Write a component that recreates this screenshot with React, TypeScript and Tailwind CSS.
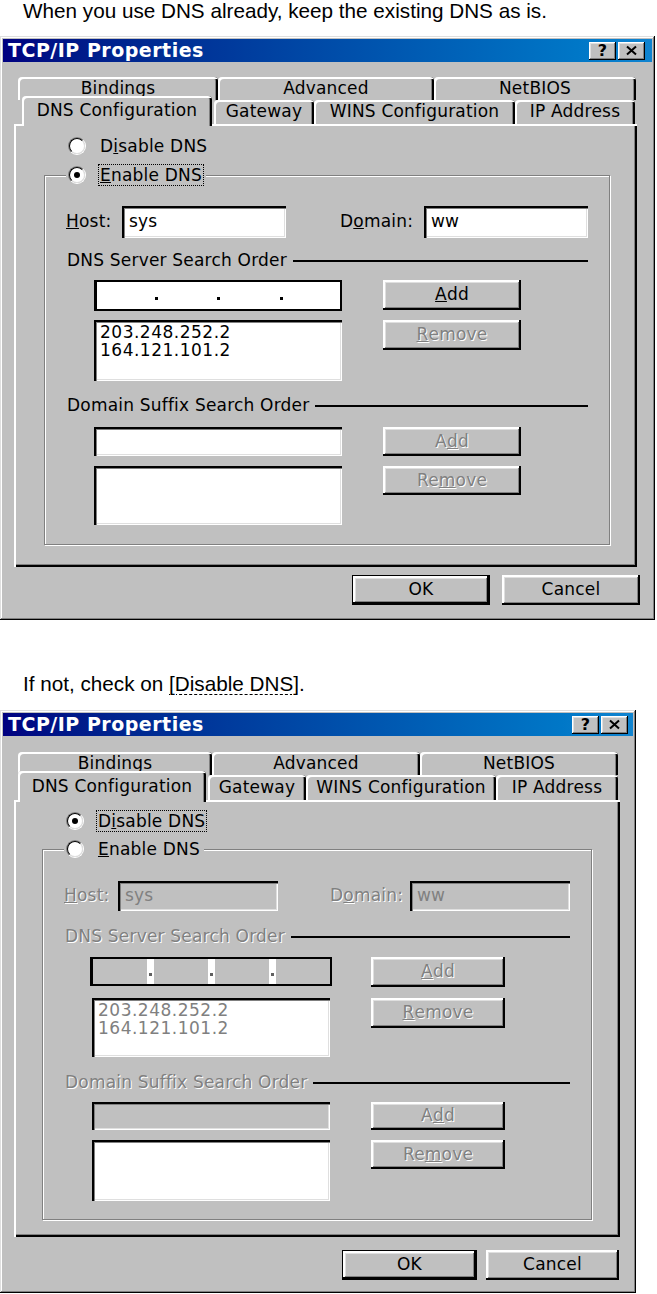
import React from "react";

const frame =
  "shadow-[inset_-1px_-1px_#000,inset_1px_1px_#dfdfdf,inset_-2px_-2px_#808080,inset_2px_2px_#fff]";
const raised =
  "shadow-[inset_-2px_-2px_#000,inset_2px_2px_#fff,inset_-3px_-3px_#808080,inset_3px_3px_#dfdfdf]";
const raisedThin =
  "shadow-[inset_-1px_-1px_#000,inset_1px_1px_#fff,inset_-2px_-2px_#808080,inset_2px_2px_#dfdfdf]";
const sunken =
  "shadow-[inset_2px_2px_#000,inset_3px_3px_#808080,inset_-1px_-1px_#fff,inset_-2px_-2px_#dfdfdf]";
const dim = "text-[#808080] [text-shadow:1px_1px_0_#fff]";

const TitleBtn = ({ children }: { children: React.ReactNode }) => (
  <div className={`w-[27px] h-[18px] bg-[#c0c0c0] flex items-center justify-center ${raisedThin}`}>
    {children}
  </div>
);

const Tab = ({ label, className }: { label: string; className: string }) => (
  <div
    className={`${className} rounded-t-[4px] bg-[#c0c0c0] flex items-center justify-center shadow-[inset_2px_2px_#fff,inset_-2px_0_#000,inset_-3px_0_#808080]`}
  >
    {label}
  </div>
);

const Radio = ({ checked }: { checked: boolean }) => (
  <span className="w-[18px] h-[18px] rounded-full border border-t-[#808080] border-l-[#808080] border-r-white border-b-white flex">
    <span className="flex-1 rounded-full border border-t-black border-l-black border-r-[#dfdfdf] border-b-[#dfdfdf] bg-white flex items-center justify-center">
      {checked && <span className="w-[6px] h-[6px] rounded-full bg-black" />}
    </span>
  </span>
);

const RadioItem = ({
  checked,
  focus,
  children,
}: {
  checked: boolean;
  focus: boolean;
  children: React.ReactNode;
}) => (
  <div className="flex items-center gap-[12px]">
    <Radio checked={checked} />
    <span
      className={`px-[1px] leading-[20px] border border-dotted ${focus ? "border-black" : "border-transparent"}`}
    >
      {children}
    </span>
  </div>
);

const Btn = ({
  children,
  className,
  disabled,
  isDefault,
}: {
  children: React.ReactNode;
  className: string;
  disabled?: boolean;
  isDefault?: boolean;
}) => (
  <div className={`${className} bg-[#c0c0c0] flex ${isDefault ? "border border-black" : ""}`}>
    <div
      className={`flex-1 flex items-center justify-center ${raised} ${disabled ? dim : "text-black"}`}
    >
      {children}
    </div>
  </div>
);

const Field = ({ className, off, text }: { className: string; off: boolean; text: string }) => (
  <div
    className={`${className} h-full ${sunken} ${off ? "bg-[#c0c0c0] text-[#808080]" : "bg-white text-black"} flex items-center pl-[7px]`}
  >
    {text}
  </div>
);

const IpField = ({ className, off }: { className: string; off: boolean }) => {
  const seg = off ? "bg-[#c0c0c0]" : "bg-white";
  const Dot = () => (
    <div className="w-[7px] bg-white flex items-center justify-center">
      <span className={`w-[3px] h-[3px] mt-[6px] ${off ? "bg-[#606060]" : "bg-black"}`} />
    </div>
  );
  return (
    <div className={`${className} h-full flex border-2 border-black border-l-[3px] bg-white`}>
      <div className={`flex-1 ${seg}`} />
      <Dot />
      <div className={`flex-1 ${seg}`} />
      <Dot />
      <div className={`flex-1 ${seg}`} />
      <Dot />
      <div className={`flex-1 ${seg}`} />
    </div>
  );
};

const Header = ({ label, off, className }: { label: string; off: boolean; className: string }) => (
  <div className={`flex items-center h-[20px] pl-[22px] pr-[21px] ${className}`}>
    <span className={off ? dim : ""}>{label}</span>
    <div className="flex-1 h-[2px] bg-black ml-[6px]" />
  </div>
);

function Dialog({ off }: { off: boolean }) {
  const p = (on: string, dis: string) => (off ? dis : on);
  const lbl = off ? dim : "";

  return (
    <div
      className={`${p("w-[655px] h-[584px]", "w-[636px] h-[583px]")} bg-[#c0c0c0] p-[3px] flex flex-col text-[17px] tracking-[0.2px] ${frame}`}
    >
      <div
        className={`h-[23px] shrink-0 flex items-center justify-between pl-[5px] ${p("pr-[7px]", "pr-[5px]")} bg-linear-to-r from-[#000080] to-[#1084d0]`}
      >
        <span className="text-white font-bold text-[19px] tracking-[0.5px] leading-none">
          TCP/IP Properties
        </span>
        <div className="flex gap-[2px]">
          <TitleBtn>
            <span className="font-bold text-[16px] leading-none text-black">?</span>
          </TitleBtn>
          <TitleBtn>
            <svg width="13" height="11" viewBox="0 0 13 11">
              <path d="M2 1.5 11 9.5M11 1.5 2 9.5" stroke="#000" strokeWidth="2" />
            </svg>
          </TitleBtn>
        </div>
      </div>

      <div className={`${p("mt-[15px]", "mt-[16px]")} ml-[11px] flex flex-col`}>
        <div className="flex h-[23px] ml-[4px]">
          <Tab label="Bindings" className={`h-full ${p("w-[200px]", "w-[194px]")}`} />
          <Tab label="Advanced" className={`h-full ${p("w-[216px]", "w-[208px]")}`} />
          <Tab label="NetBIOS" className={`h-full ${p("w-[202px]", "w-[198px]")}`} />
        </div>
        <div className={`flex items-start ${p("h-[24px] ml-[8px]", "h-[25px] ml-[4px]")}`}>
          <Tab
            label="DNS Configuration"
            className={`relative z-10 -mt-[4px] ${p("w-[190px] h-[30px]", "w-[188px] h-[31px]")}`}
          />
          <Tab label="Gateway" className={`h-full ml-[2px] ${p("w-[100px]", "w-[98px]")}`} />
          <Tab label="WINS Configuration" className={`h-full ${p("w-[201px]", "w-[190px]")}`} />
          <Tab label="IP Address" className={`h-full ${p("w-[120px]", "w-[122px]")}`} />
        </div>
      </div>

      <div
        className={`ml-[11px] shrink-0 flex flex-col ${p("w-[623px] h-[443px] pt-[9px]", "w-[606px] h-[437px] pt-[8px]")} shadow-[inset_2px_2px_#fff,inset_-2px_-2px_#000,inset_-3px_-3px_#808080]`}
      >
        <div className={`h-[26px] flex items-center ${p("ml-[54px]", "ml-[52px]")}`}>
          <RadioItem checked={off} focus={off}>
            D<u>i</u>sable DNS
          </RadioItem>
        </div>

        <div
          className={`${p("mt-[16px] ml-[30px] w-[566px] h-[370px]", "mt-[15px] ml-[28px] w-[550px] h-[371px]")} border border-[#808080] shadow-[inset_1px_1px_#fff,1px_1px_#fff] flex flex-col`}
        >
          <div className="-mt-[14px] ml-[21px] h-[26px] w-fit px-[2px] bg-[#c0c0c0] flex items-center">
            <RadioItem checked={!off} focus={!off}>
              <u>E</u>nable DNS
            </RadioItem>
          </div>

          <div className={`flex items-center pl-[21px] ${p("mt-[18px] h-[32px]", "mt-[19px] h-[30px]")}`}>
            <span className={`${p("w-[56px]", "w-[54px]")} ${lbl}`}>
              <u>H</u>ost:
            </span>
            <Field className={p("w-[164px]", "w-[160px]")} off={off} text="sys" />
            <span className={`${p("ml-[54px] w-[84px]", "ml-[52px] w-[80px]")} ${lbl}`}>
              D<u>o</u>main:
            </span>
            <Field className={p("w-[164px]", "w-[160px]")} off={off} text="ww" />
          </div>

          <Header label="DNS Server Search Order" off={off} className={p("mt-[13px]", "mt-[16px]")} />

          <div className={`flex ${p("mt-[9px] h-[31px] pl-[49px]", "mt-[10px] h-[29px] pl-[47px]")}`}>
            <IpField off={off} className={p("w-[248px]", "w-[242px]")} />
            <Btn className={p("ml-[41px] w-[138px] h-[30px]", "ml-[39px] w-[134px] h-[30px]")} disabled={off}>
              <u>A</u>dd
            </Btn>
          </div>

          <div className={`flex items-start ${p("mt-[9px] pl-[49px]", "mt-[12px] pl-[49px]")}`}>
            <div
              className={`${p("w-[248px] h-[61px] text-black", "w-[238px] h-[59px] text-[#808080]")} bg-white ${sunken} pl-[6px] pt-[3px] text-[17px] leading-[18px] tracking-[0.5px]`}
            >
              <div>203.248.252.2</div>
              <div>164.121.101.2</div>
            </div>
            <Btn className={p("ml-[41px] w-[138px] h-[30px]", "ml-[41px] w-[134px] h-[30px]")} disabled>
              <u>R</u>emove
            </Btn>
          </div>

          <Header label="Domain Suffix Search Order" off={off} className={p("mt-[15px]", "mt-[16px]")} />

          <div className={`flex ${p("mt-[11px] h-[29px] pl-[49px]", "mt-[9px] h-[28px] pl-[49px]")}`}>
            <Field className={p("w-[248px]", "w-[238px]")} off={off} text="" />
            <Btn className={p("ml-[41px] w-[138px]", "ml-[41px] w-[134px]")} disabled>
              A<u>d</u>d
            </Btn>
          </div>

          <div className={`flex items-start ${p("mt-[10px] pl-[49px]", "mt-[10px] pl-[49px]")}`}>
            <div className={`${p("w-[248px] h-[59px]", "w-[238px] h-[61px]")} bg-white ${sunken}`} />
            <Btn className={p("ml-[41px] w-[138px] h-[29px]", "ml-[41px] w-[134px] h-[29px]")} disabled>
              Re<u>m</u>ove
            </Btn>
          </div>
        </div>
      </div>

      <div className={`flex justify-end h-[30px] ${p("mt-[8px] pr-[12px] gap-[12px]", "mt-[13px] pr-[14px] gap-[9px]")}`}>
        <Btn className={p("w-[138px] h-full", "w-[135px] h-full")} isDefault>
          OK
        </Btn>
        <Btn className={p("w-[138px] h-full", "w-[133px] h-full")}>Cancel</Btn>
      </div>
    </div>
  );
}

export default function App() {
  return (
    <div className="w-[657px] h-[1294px] bg-white overflow-hidden text-black font-['DejaVu_Sans',sans-serif]">
      <p className="h-[22px] pl-[23px] leading-[22px] text-[20.7px] font-['Liberation_Sans',Arial,sans-serif]">
        When you use DNS already, keep the existing DNS as is.
      </p>
      <div className="mt-[14px]">
        <Dialog off={false} />
      </div>
      <p className="mt-[53px] h-[22px] pl-[23px] leading-[22px] text-[20.7px] font-['Liberation_Sans',Arial,sans-serif]">
        If not, check on{" "}
        <span className="underline decoration-dashed decoration-1 underline-offset-[3px]">
          [Disable DNS]
        </span>
        .
      </p>
      <div className="mt-[15px]">
        <Dialog off />
      </div>
    </div>
  );
}
